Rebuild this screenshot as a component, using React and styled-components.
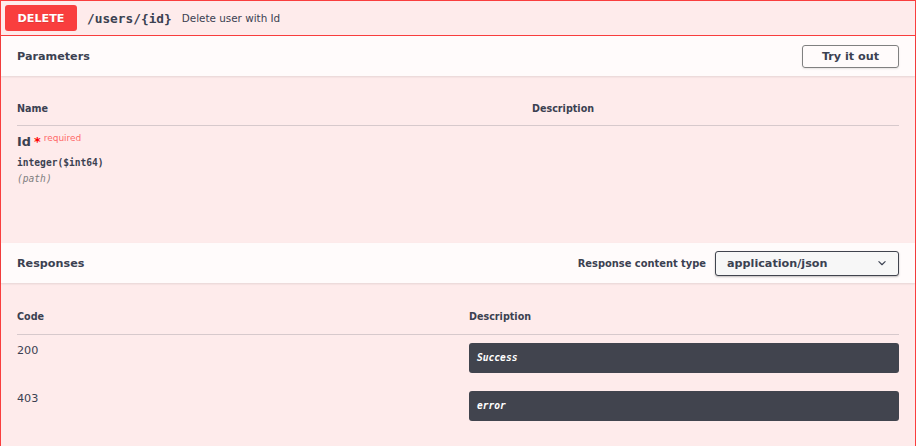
import React from "react";
import styled, { createGlobalStyle } from "styled-components";

const GlobalStyle = createGlobalStyle`
  html, body {
    margin: 0;
    padding: 0;
    background: #fff;
    font-family: "DejaVu Sans", sans-serif;
    color: #3b4151;
  }
  * { box-sizing: border-box; }
`;

const Opblock = styled.div`
  border: 1px solid #f93e3e;
  background: #feebeb;
  min-height: 460px;
`;

const Summary = styled.div`
  display: flex;
  align-items: center;
  padding: 4px;
  border-bottom: 1px solid #f93e3e;
`;

const Method = styled.span`
  width: 72px;
  height: 26px;
  display: flex;
  align-items: center;
  justify-content: center;
  background: #f93e3e;
  color: #fff;
  border-radius: 3px;
  font-size: 11.2px;
  font-weight: 700;
  text-shadow: 0 1px 0 rgba(0, 0, 0, 0.1);
`;

const Path = styled.span`
  margin-left: 10px;
  font-family: "DejaVu Sans Mono", monospace;
  font-size: 12.8px;
  font-weight: 700;
  color: #3b4151;
`;

const SummaryDesc = styled.span`
  margin-left: 10px;
  font-size: 10.4px;
  color: #3b4151;
`;

const SectionHeader = styled.div`
  display: flex;
  align-items: center;
  justify-content: space-between;
  min-height: 40px;
  padding: 6px 16px;
  background: rgba(255, 255, 255, 0.8);
  box-shadow: 0 1px 2px rgba(0, 0, 0, 0.1);
`;

const Title = styled.h4`
  margin: 0;
  font-size: 11.2px;
  font-weight: 700;
  color: #3b4151;
`;

const TryButton = styled.button`
  width: 97px;
  height: 23px;
  padding: 0;
  border: 1.5px solid gray;
  border-radius: 3px;
  background: transparent;
  box-shadow: 0 1px 2px rgba(0, 0, 0, 0.1);
  font-family: "DejaVu Sans", sans-serif;
  font-size: 11.2px;
  font-weight: 700;
  color: #3b4151;
`;

const Body = styled.div`
  padding: 16px 16px 0;
  min-height: ${(p) => p.$min || 0}px;
`;

const Row = styled.div`
  display: grid;
  grid-template-columns: ${(p) => p.$cols};
  align-items: start;
  border-bottom: ${(p) => (p.$head ? "1px solid rgba(59, 65, 81, 0.2)" : "none")};
  padding: ${(p) => p.$pad || "8px 0"};
`;

const HeadCell = styled.div`
  font-size: 9.6px;
  font-weight: 700;
  color: #3b4151;
`;

const ParamName = styled.div`
  font-size: 12.8px;
  font-weight: 700;
  color: #3b4151;
  span {
    color: red;
    margin-left: 3px;
  }
  sup {
    font-size: 9px;
    font-weight: 400;
    color: rgba(255, 0, 0, 0.6);
    vertical-align: 0;
    position: relative;
    top: -5px;
    margin-left: 3px;
  }
`;

const ParamType = styled.div`
  padding: 8px 0 5px;
  font-family: "DejaVu Sans Mono", monospace;
  font-size: 9.6px;
  font-weight: 600;
  color: #3b4151;
`;

const ParamIn = styled.div`
  font-family: "DejaVu Sans Mono", monospace;
  font-size: 9.6px;
  font-style: italic;
  color: gray;
`;

const TypeControl = styled.div`
  display: flex;
  align-items: center;
  gap: 9px;
`;

const Label = styled.label`
  font-size: 9.9px;
  font-weight: 700;
  color: #3b4151;
`;

const Select = styled.div`
  position: relative;
  width: 184px;
  height: 25px;
  display: flex;
  align-items: center;
  padding-left: 11px;
  border: 1.5px solid #41444e;
  border-radius: 3px;
  background: #f7f7f7;
  box-shadow: 0 1px 2px rgba(0, 0, 0, 0.25);
  font-size: 11.2px;
  font-weight: 700;
  color: #3b4151;
  svg {
    position: absolute;
    right: 8px;
    top: 50%;
    transform: translateY(-50%);
  }
`;

const Status = styled.div`
  font-size: 11.2px;
  color: #3b4151;
  padding-top: 1px;
`;

const Markdown = styled.div`
  background: #41444e;
  color: #fff;
  border-radius: 3px;
  padding: 8px;
  font-family: "DejaVu Sans Mono", monospace;
  font-size: 9.6px;
  font-style: italic;
  font-weight: 600;
  line-height: 14px;
`;

const responses = [
  { code: "200", text: "Success" },
  { code: "403", text: "error" },
];

export default function App() {
  return (
    <>
      <GlobalStyle />
      <Opblock>
        <Summary>
          <Method>DELETE</Method>
          <Path>/users/{"{id}"}</Path>
          <SummaryDesc>Delete user with Id</SummaryDesc>
        </Summary>

        <SectionHeader>
          <Title>Parameters</Title>
          <TryButton>Try it out</TryButton>
        </SectionHeader>
        <Body $min={167}>
          <Row $head $cols="515px 1fr" $pad="11px 0">
            <HeadCell>Name</HeadCell>
            <HeadCell>Description</HeadCell>
          </Row>
          <Row $cols="515px 1fr">
            <div>
              <ParamName>
                Id<span>*</span>
                <sup>required</sup>
              </ParamName>
              <ParamType>integer($int64)</ParamType>
              <ParamIn>(path)</ParamIn>
            </div>
            <div />
          </Row>
        </Body>

        <SectionHeader>
          <Title>Responses</Title>
          <TypeControl>
            <Label>Response content type</Label>
            <Select>
              application/json
              <svg width="16" height="16" viewBox="0 0 20 20">
                <path
                  fill="#3b4151"
                  d="M13.418 7.859a.695.695 0 0 1 .978 0 .68.68 0 0 1 0 .969l-3.908 3.83a.697.697 0 0 1-.979 0l-3.908-3.83a.68.68 0 0 1 0-.969.695.695 0 0 1 .978 0L10 11l3.418-3.141z"
                />
              </svg>
            </Select>
          </TypeControl>
        </SectionHeader>
        <Body>
          <Row $head $cols="452px 1fr" $pad="12px 0">
            <HeadCell>Code</HeadCell>
            <HeadCell>Description</HeadCell>
          </Row>
          {responses.map((r) => (
            <Row key={r.code} $cols="452px 1fr" $pad="8px 0 10px">
              <Status>{r.code}</Status>
              <Markdown>{r.text}</Markdown>
            </Row>
          ))}
        </Body>
      </Opblock>
    </>
  );
}
